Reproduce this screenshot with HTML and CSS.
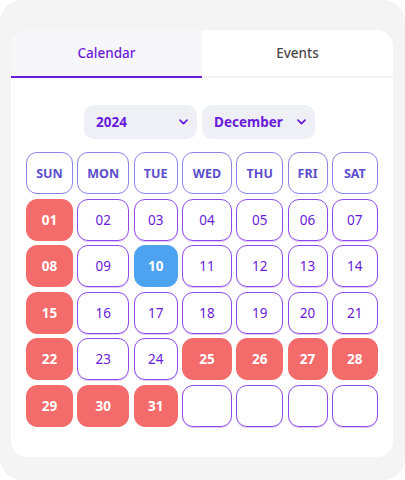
FILE: index.html
```html
<!DOCTYPE html>
<html>
<head>
<meta charset="utf-8">
<link rel="stylesheet" href="styles.css">
</head>
<body>
<div class="frame">
  <div class="card">
    <div class="tabs">
      <div class="tab active">Calendar</div>
      <div class="tab">Events</div>
    </div>
    <div class="selects">
      <div class="select"><span>2024</span><svg class="chev" width="9" height="6" viewBox="0 0 9 6"><path d="M1 1.2l3.5 3.4 3.5-3.4" fill="none" stroke="#6a1bd9" stroke-width="1.7" stroke-linecap="round" stroke-linejoin="round"/></svg></div>
      <div class="select"><span>December</span><svg class="chev" width="9" height="6" viewBox="0 0 9 6"><path d="M1 1.2l3.5 3.4 3.5-3.4" fill="none" stroke="#6a1bd9" stroke-width="1.7" stroke-linecap="round" stroke-linejoin="round"/></svg></div>
    </div>
    <div class="grid">
      <div class="head">SUN</div><div class="head">MON</div><div class="head">TUE</div><div class="head">WED</div><div class="head">THU</div><div class="head">FRI</div><div class="head">SAT</div>
      <div class="day red">01</div><div class="day">02</div><div class="day">03</div><div class="day">04</div><div class="day">05</div><div class="day">06</div><div class="day">07</div>
      <div class="day red">08</div><div class="day">09</div><div class="day blue">10</div><div class="day">11</div><div class="day">12</div><div class="day">13</div><div class="day">14</div>
      <div class="day red">15</div><div class="day">16</div><div class="day">17</div><div class="day">18</div><div class="day">19</div><div class="day">20</div><div class="day">21</div>
      <div class="day red">22</div><div class="day">23</div><div class="day">24</div><div class="day red">25</div><div class="day red">26</div><div class="day red">27</div><div class="day red">28</div>
      <div class="day red">29</div><div class="day red">30</div><div class="day red">31</div><div class="day"></div><div class="day"></div><div class="day"></div><div class="day"></div>
    </div>
  </div>
</div>
</body>
</html>
```
FILE: styles.css
```css
html, body {
  margin: 0;
  padding: 0;
  background: #ffffff;
  font-family: "Noto Sans", "Open Sans", sans-serif;
}
.frame {
  width: 405px;
  height: 480px;
  box-sizing: border-box;
  background: #f4f4f5;
  border-radius: 22px;
  padding: 30px 12px 23px 11px;
}
.card {
  background: #ffffff;
  border-radius: 16px;
  height: 427px;
  overflow: hidden;
}
.tabs {
  display: flex;
  border-bottom: 2px solid #f3f3f5;
}
.tab {
  flex: 1;
  height: 46px;
  display: flex;
  align-items: center;
  justify-content: center;
  font-size: 13.5px;
  font-weight: 500;
  color: #4a4a4a;
  margin-bottom: -2px;
  border-bottom: 2px solid transparent;
}
.tab.active {
  background: #f7f7f9;
  color: #6a1bd9;
  border-bottom-color: #6a1bd9;
}
.selects {
  display: flex;
  justify-content: center;
  gap: 5px;
  margin: 27px 0 13px -5px;
}
.select {
  width: 113px;
  height: 34px;
  box-sizing: border-box;
  background: #eef0f6;
  border-radius: 10px;
  padding: 0 9px 0 12px;
  display: flex;
  align-items: center;
  justify-content: space-between;
  font-weight: 700;
  font-size: 13.5px;
  color: #6a1bd9;
}
.chev { display: block; }
.grid {
  display: grid;
  grid-template-columns: 46.6px 52.3px 44px 50px 47px 40px 46px;
  grid-auto-rows: 42px;
  column-gap: 4.3px;
  row-gap: 4.5px;
  justify-content: center;
}
.head, .day {
  border-radius: 11px;
  display: flex;
  align-items: center;
  justify-content: center;
  box-sizing: border-box;
}
.head {
  border: 1px solid #8c84e4;
  color: #5b4fcb;
  font-weight: 700;
  font-size: 12.5px;
}
.day {
  border: 1px solid #8d4ae6;
  box-shadow: 0 1px 0 #dccbfa;
  color: #6a1bd9;
  font-size: 13.5px;
}
.day.red {
  background: #f46b6b;
  border-color: #f46b6b;
  box-shadow: none;
  color: #ffffff;
  font-weight: 700;
}
.day.blue {
  background: #4ea3f0;
  border-color: #4ea3f0;
  box-shadow: none;
  color: #ffffff;
  font-weight: 700;
}
```
